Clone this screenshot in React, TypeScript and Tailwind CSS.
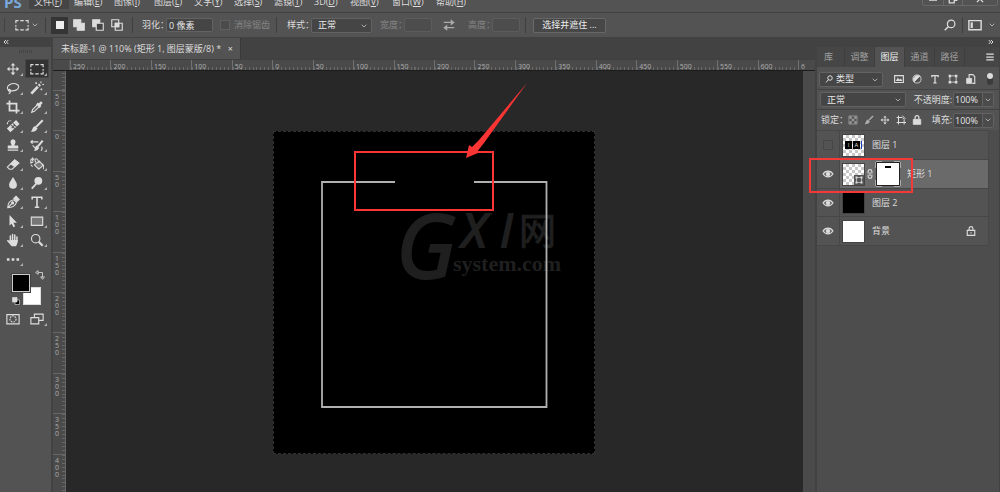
import { useState } from 'react';
import type { ReactNode } from 'react';
import clsx from 'clsx';
import { ChevronDown, ChevronsLeft, ChevronsRight } from 'lucide-react';

interface MenuItem {
    label: string;
    hotkey: string;
    width: string;
}

interface Tool {
    name: string;
    icon: ReactNode;
}

interface Layer {
    name: string;
    visible: boolean;
    kind: 'art' | 'shape' | 'black' | 'white';
}

const menus: MenuItem[] = [
    { label: '文件', hotkey: 'F', width: 'w-10' },
    { label: '编辑', hotkey: 'E', width: 'w-10' },
    { label: '图像', hotkey: 'I', width: 'w-10' },
    { label: '图层', hotkey: 'L', width: 'w-10' },
    { label: '文字', hotkey: 'Y', width: 'w-10' },
    { label: '选择', hotkey: 'S', width: 'w-10' },
    { label: '滤镜', hotkey: 'T', width: 'w-10' },
    { label: '3D', hotkey: 'D', width: 'w-9' },
    { label: '视图', hotkey: 'V', width: 'w-[42px]' },
    { label: '窗口', hotkey: 'W', width: 'w-11' },
    { label: '帮助', hotkey: 'H', width: 'w-10' },
];

const layers: Layer[] = [
    { name: '图层 1', visible: false, kind: 'art' },
    { name: '矩形 1', visible: true, kind: 'shape' },
    { name: '图层 2', visible: true, kind: 'black' },
    { name: '背景', visible: true, kind: 'white' },
];

const columnMarks = [250, 200, 150, 100, 50, 0, 50, 100, 150, 200, 250, 300, 350, 400, 450, 500, 550, 600];
const rowMarks = [50, 0, 50, 100, 150, 200, 250, 300, 350, 400];

function Icon({ children, className = 'size-3.5' }: { children: ReactNode; className?: string }) {
    return (
        <svg viewBox="0 0 16 16" fill="none" stroke="currentColor" strokeWidth="1.3" className={clsx('shrink-0', className)} aria-hidden="true">
            {children}
        </svg>
    );
}

const moveShape = (
    <>
        <path d="M8 3v10M3 8h10" />
        <path d="M8 1l2.7 3H5.3zM8 15l2.7-3H5.3zM1 8l3-2.7v5.4zM15 8l-3-2.7v5.4z" fill="currentColor" stroke="none" />
    </>
);

const marqueeShape = <path d="M1 6V3h3M6 3h4M12 3h3v3M15 8v2M15 11v2.500h-3M10 13.500H6M4 13.500H1V11M1 10V8" />;

const tools: Tool[] = [
    { name: '移动', icon: moveShape },
    { name: '矩形选框', icon: marqueeShape },
    {
        name: '套索',
        icon: (
            <path d="M4 11C1 10 .5 6.500 4 4.300 8 1.800 14.500 2.800 14.500 6.500c0 3.500-5 5.500-9.500 4.500M5 11c0-2-2.500-1.800-2.300-.2C3 12.400 5.500 11.500 5 11zm0 0c.2 2-.8 3.200-2 3.500" />
        ),
    },
    {
        name: '魔棒',
        icon: (
            <>
                <path d="M1.500 14.500l7.500-8" strokeWidth="3" />
                <path d="M10 5.500l1.500-1.500" strokeWidth="3" />
                <path d="M7 1.500v2M6 2.500h2M12.500.5v2M14 4h2M13 8.500v2M12 9.500h2" />
            </>
        ),
    },
    { name: '裁剪', icon: <path d="M4 .5V12h11.500M.5 4H12v11.500" strokeWidth="2" /> },
    {
        name: '吸管',
        icon: (
            <>
                <path d="M2 14l1-3 6-6 2 2-6 6z" />
                <path d="M8 4l4 4M10 6l3.500-3.500" strokeWidth="3" />
            </>
        ),
    },
    {
        name: '修复画笔',
        icon: (
            <>
                <path d="M3 13L13.500 3.500" strokeWidth="6" />
                <path d="M6 7l4 4M8 5l4 4M6.500 10.500l4-4" stroke="#555" />
                <path d="M1.500 6c0-3 2-4.500 4.500-4" strokeDasharray="2 1" />
            </>
        ),
    },
    {
        name: '画笔',
        icon: (
            <>
                <path d="M14.500 1.500L7 9" strokeWidth="2.400" />
                <path d="M6 8l2.500 2.500C7.500 14 4.500 14.500 1 14.500 3 13 2.500 9 6 8z" fill="currentColor" stroke="none" />
            </>
        ),
    },
    {
        name: '仿制图章',
        icon: (
            <path d="M8 1.500a3 3 0 0 1 2.400 4.700L9.500 8.500h4.500V12H2V8.500h4.500l-.9-2.300A3 3 0 0 1 8 1.500zM2 13.200h12v1.500H2z" fill="currentColor" stroke="none" />
        ),
    },
    {
        name: '历史记录画笔',
        icon: (
            <>
                <path d="M14.500 3L9 9.500" strokeWidth="2.400" />
                <path d="M8 8.500l2.500 2.500C9.500 14 7 14.500 4.500 14.500 6 13 5.500 9 8 8.500z" fill="currentColor" stroke="none" />
                <path d="M1.500 4.500h8M3 2.500l-2 2 2 2M3 8.500l3 3M13 10c1.500 1 1 3-.5 4.500" />
            </>
        ),
    },
    {
        name: '橡皮擦',
        icon: (
            <>
                <path d="M1.500 11.500L10 3.500l4.500 3.500-7.500 7H4z" />
                <path d="M5.500 8L10 3.500l4.500 3.500-4.500 4z" fill="currentColor" />
            </>
        ),
    },
    {
        name: '油漆桶',
        icon: (
            <>
                <path d="M5 9l5.500-4.500L15 9.500 10 14z" fill="#777" />
                <path d="M7 6.500C5 4 5.500 2 7 2s2.500 2 3.500 5M14 8c2 2 2 4 1.500 6" />
                <path d="M1 2.500h4M1 2.500v4.500l3-1.500M3 .5v4M1 9l2 2" />
            </>
        ),
    },
    { name: '模糊', icon: <path d="M8 1c2.500 4 4.500 6.500 4.500 9a4.500 4.500 0 0 1-9 0C3.500 7.500 5.500 5 8 1z" fill="currentColor" stroke="none" /> },
    {
        name: '减淡',
        icon: (
            <>
                <circle cx="9.500" cy="5.500" r="4.500" fill="currentColor" stroke="none" />
                <path d="M7 9l-5 5.500" strokeWidth="2" />
            </>
        ),
    },
    {
        name: '钢笔',
        icon: (
            <>
                <path d="M2 14.500c0-5 1.500-8 7-9l3 3c-1.500 4.500-4.500 6-10 6zM2 14.500l4.500-4.500" />
                <path d="M9 4l2.500-2.500L15 5l-2.500 2.500z" fill="currentColor" />
                <circle cx="7.500" cy="9" r="1.200" fill="currentColor" />
            </>
        ),
    },
    { name: '横排文字', icon: <path d="M2.500 5V2.500h11V5M8 2.500v11M5.500 14h5" strokeWidth="1.800" /> },
    { name: '路径选择', icon: <path d="M4 1l8.500 9H8.500l2 4-2 1-2-4L4 13z" fill="currentColor" stroke="none" /> },
    { name: '矩形', icon: <path d="M1.500 3.500h13v9.500h-13z" fill="#777" /> },
    {
        name: '抓手',
        icon: (
            <>
                <path d="M5 9.500V3.500M7.500 9V1.800M10 9V2.300M12.500 9V4.500" strokeWidth="1.700" strokeLinecap="round" />
                <path d="M4 8h9.500c0 3-.5 4.500-2 7H6.500C4.500 13 3 11 1 8.800c.5-1.500 2-1 3.500.8z" fill="currentColor" stroke="none" />
            </>
        ),
    },
    {
        name: '缩放',
        icon: (
            <>
                <circle cx="6.500" cy="6.500" r="4.800" />
                <path d="M10 10l4.500 4.500" strokeWidth="2.500" />
            </>
        ),
    },
];

function ToolButton({ name, children, active = false, onClick }: { name: string; children: ReactNode; active?: boolean; onClick?: () => void }) {
    return (
        <button
            type="button"
            aria-label={name}
            onClick={onClick}
            className={clsx('relative flex h-[19px] items-center justify-center', active && 'rounded-xs bg-[#333] shadow-[inset_0_0_0_1px_#454545]')}
        >
            {children}
            <span className="absolute right-0.5 bottom-0.5 size-[3px] bg-[#b0b0b0] [clip-path:polygon(100%_0,100%_100%,0_100%)]" />
        </button>
    );
}

function Divider({ className }: { className?: string }) {
    return <span className={clsx('h-4 w-px shrink-0 bg-[#3f3f3f]', className)} />;
}

function MenuBar() {
    return (
        <header className="flex h-[13px] shrink-0 items-end overflow-hidden border-b border-[#404040] pb-[3px]">
            <span className="ml-1 w-[25px] font-['Open_Sans',sans-serif] text-[15px] leading-[14px] font-bold text-[#78aadd]">PS</span>
            <nav className="flex">
                {menus.map((menu, idx) => (
                    <button
                        key={menu.label}
                        type="button"
                        className={clsx('h-3.5 shrink-0 pl-[5px] text-left leading-[14px] whitespace-nowrap', menu.width, idx === 0 && 'bg-[#454545]')}
                    >
                        {menu.label}(<u>{menu.hotkey}</u>)
                    </button>
                ))}
            </nav>
            <div className="mr-0.5 mb-[3px] ml-auto flex h-3.5 items-end rounded-xs border border-[#686868]">
                <button type="button" aria-label="最小化" className="flex h-3 w-5 items-end justify-center pb-1">
                    <span className="h-[3px] w-2 bg-[#bbb]" />
                </button>
                <button type="button" aria-label="还原" className="flex h-3 w-5 items-center justify-center border-x border-[#686868]">
                    <Icon className="size-2.5"><path d="M5 6V2h9v8h-3M2 6h8v8H2z" strokeWidth="2" /></Icon>
                </button>
                <button type="button" aria-label="关闭" className="flex h-3 w-[34px] items-center justify-center">
                    <Icon className="size-2.5"><path d="M3 3l10 10M13 3L3 13" strokeWidth="2" /></Icon>
                </button>
            </div>
        </header>
    );
}

const fieldClass = 'h-3.5 shrink-0 rounded-xs border border-[#626262] bg-[#454545] px-0.5 text-[#e6e6e6] disabled:border-[#5c5c5c] disabled:bg-[#4d4d4d]';

function SelectBox({ label, value, className, indent = 'pl-1.5' }: { label: string; value: string; className?: string; indent?: string }) {
    return (
        <div className={clsx('relative shrink-0', className)}>
            <select aria-label={label} defaultValue={value} className={clsx('block h-[15px] w-full appearance-none rounded-xs border border-[#626262] bg-[#454545] text-[#e6e6e6]', indent)}>
                <option>{value}</option>
            </select>
            <ChevronDown className="pointer-events-none absolute top-1 right-1 size-2" />
        </div>
    );
}

function OptionsBar() {
    return (
        <div className="flex h-6 shrink-0 items-center whitespace-nowrap">
            <span className="ml-1 h-3.5 w-px bg-[#424242]" />
            <Icon className="ml-2.5 size-3.5">{marqueeShape}</Icon>
            <ChevronDown className="ml-0.5 size-2" />
            <Divider className="ml-1.5" />
            <button type="button" aria-label="新选区" className="ml-[5px] flex size-[17px] items-center justify-center bg-[#353535]">
                <span className="size-2 bg-[#eee]" />
            </button>
            <button type="button" aria-label="添加到选区" className="ml-1">
                <Icon><path d="M2 2h8v4h4v8H6v-4H2z" fill="currentColor" /></Icon>
            </button>
            <button type="button" aria-label="从选区减去" className="ml-[5px]">
                <Icon><path d="M2 2h8v8H2z" fill="currentColor" /><path d="M6 6h8v8H6z" fill="#444" /></Icon>
            </button>
            <button type="button" aria-label="与选区交叉" className="ml-[5px]">
                <Icon><path d="M2 2h8v8H2zM6 6h8v8H6z" /><path d="M6 6h4v4H6z" fill="currentColor" /></Icon>
            </button>
            <Divider className="ml-2" />
            <label htmlFor="feather" className="ml-[9px] w-6">羽化：</label>
            <input id="feather" defaultValue="0 像素" className={clsx(fieldClass, 'w-[47px]')} />
            <input id="antialias" type="checkbox" disabled className="ml-[7px] size-2.5 appearance-none border border-[#606060] bg-[#4b4b4b]" />
            <label htmlFor="antialias" className="ml-1 w-9 text-[#858585]">消除锯齿</label>
            <Divider className="ml-1.5" />
            <label htmlFor="style" className="ml-2.5 w-6">样式：</label>
            <SelectBox label="样式" value="正常" className="w-[61px]" />
            <label htmlFor="width" className="ml-2 w-6 text-[#858585]">宽度：</label>
            <input id="width" disabled className={clsx(fieldClass, 'w-7')} />
            <Icon className="ml-2.5 size-3.5 text-[#aaa]">
                <path d="M2 5h10M4 11h10" />
                <path d="M10 1.500L14.500 5 10 8.500zM6 7.500L1.500 11 6 14.500z" fill="currentColor" stroke="none" />
            </Icon>
            <label htmlFor="height" className="ml-3 w-6 text-[#858585]">高度：</label>
            <input id="height" disabled className={clsx(fieldClass, 'w-7')} />
            <Divider className="ml-[5px]" />
            <button type="button" className="ml-[7px] h-[15px] w-[73px] shrink-0 rounded-xs border border-[#686868] bg-[#474747] text-[#eee]">选择并遮住 ...</button>
            <button type="button" aria-label="搜索" className="mr-1.5 ml-auto">
                <Icon className="size-3"><circle cx="9.500" cy="6.500" r="5" strokeWidth="1.600" /><path d="M6 10l-5 5" strokeWidth="2" /></Icon>
            </button>
            <Divider />
            <button type="button" aria-label="工作区" className="mr-1 ml-[5px] flex items-center gap-1.5">
                <Icon><path d="M1 3h14v10.500H1z" strokeWidth="1.600" /><path d="M3 5h2.500v6.500H3z" fill="currentColor" stroke="none" /></Icon>
                <ChevronDown className="size-2" />
            </button>
        </div>
    );
}

function ToolBox() {
    const [selected, setSelected] = useState('矩形选框');

    return (
        <aside className="flex w-[51px] shrink-0 flex-col">
            <div className="flex h-2.5 items-center bg-[#424242] pl-0.5">
                <ChevronsLeft className="size-2" strokeWidth={3} />
            </div>
            <div className="flex h-3 justify-center pt-[3px]">
                <span className="h-[3px] w-3.5 bg-[repeating-linear-gradient(90deg,#454545_0_1px,transparent_1px_2px)]" />
            </div>
            <div className="grid grid-cols-[24px_24px] pl-px">
                {tools.map(tool => (
                    <ToolButton key={tool.name} name={tool.name} active={selected === tool.name} onClick={() => setSelected(tool.name)}>
                        <Icon>{tool.icon}</Icon>
                    </ToolButton>
                ))}
                <ToolButton name="编辑工具栏">
                    <Icon><path d="M1 7h3v3H1zM6.500 7h3v3h-3zM12 7h3v3h-3z" fill="currentColor" stroke="none" /></Icon>
                </ToolButton>
            </div>
            <div className="grid grid-cols-[11px_8px_11px] grid-rows-[13px_6px_12px] pt-1.5 pl-3">
                <button type="button" aria-label="前景色" className="z-10 col-span-2 col-start-1 row-span-2 row-start-1 size-[18px] border border-[#ccc] bg-black outline outline-[#444]" />
                <button type="button" aria-label="背景色" className="col-span-2 col-start-2 row-span-2 row-start-2 size-[18px] border border-[#ddd] bg-white" />
                <button type="button" aria-label="切换颜色" className="col-start-3 row-start-1 -mt-1 ml-1 size-2.5">
                    <Icon className="size-2.5"><path d="M5 4h7v8M5 1L1 4l4 3zM9 11h6l-3 4z" fill="none" /></Icon>
                </button>
                <button type="button" aria-label="默认颜色" className="col-start-1 row-start-3 mt-1 size-2">
                    <Icon className="size-2"><path d="M6 6h9v9H6z" fill="#000" /><path d="M1 1h9v9H1z" fill="#ddd" /></Icon>
                </button>
            </div>
            <div className="mt-1 grid grid-cols-[24px_24px] pl-px">
                <button type="button" aria-label="快速蒙版" className="flex h-[19px] items-center justify-center">
                    <Icon><path d="M1 3h14v10.500H1z" /><circle cx="8" cy="8" r="3.500" strokeDasharray="2 1" /></Icon>
                </button>
                <ToolButton name="屏幕模式">
                    <Icon><path d="M5 2.500h10v7H5z" /><path d="M1 6.500h9v7H1z" fill="#535353" /></Icon>
                </ToolButton>
            </div>
        </aside>
    );
}

function TopRuler() {
    return (
        <div className="flex h-3 shrink-0 overflow-hidden border-y border-t-[#404040] border-b-[#1c1c1c] bg-[#4a4a4a] text-[7px] leading-[13px] text-[#aaa]">
            <span className="w-[17px] shrink-0 border-r border-[#555]" />
            <div className="grid w-[728px] shrink-0 grid-cols-[repeat(18,1fr)]">
                {columnMarks.map((mark, idx) => (
                    <div key={idx} className="h-2.5 border-l border-[#707070] bg-[repeating-linear-gradient(90deg,#686868_0_1px,transparent_1px_10%)] bg-[length:100%_3px] bg-bottom bg-no-repeat pl-0.5">
                        {mark}
                    </div>
                ))}
            </div>
            <span className="border-l border-[#707070] pl-0.5">6</span>
        </div>
    );
}

function SideRuler() {
    return (
        <div className="w-[13px] shrink-0 overflow-hidden border-r border-[#666] bg-[#4a4a4a] text-[7px] leading-[7px] text-[#aaa]">
            <div className="h-[19px] bg-[repeating-linear-gradient(0deg,#686868_0_1px,transparent_1px_4px)] bg-[length:3px_100%] bg-right bg-no-repeat" />
            <div className="grid h-[404px] grid-rows-[repeat(10,1fr)]">
                {rowMarks.map((mark, idx) => (
                    <div key={idx} className="flex flex-col border-t border-[#666] bg-[repeating-linear-gradient(180deg,#686868_0_1px,transparent_1px_10%)] bg-[length:3px_100%] bg-right bg-no-repeat pt-0.5 pl-0.5">
                        {String(mark).split('').map((digit, pos) => (
                            <span key={pos}>{digit}</span>
                        ))}
                    </div>
                ))}
            </div>
        </div>
    );
}

function Artboard() {
    return (
        <div className="absolute top-[60px] left-[207px] h-[323px] w-[322px] border border-dashed border-[#303030] bg-black">
            <svg width="322" height="323" viewBox="0 0 322 323" className="-mt-px -ml-px overflow-visible">
                <g fill="#1f1f1f" stroke="#1f1f1f">
                    <text x="123" y="147" fontSize="88" fontStyle="italic" strokeWidth="2" className="font-['Noto_Sans',sans-serif]">G</text>
                    <text x="189" y="116" fontSize="46" fontStyle="italic" strokeWidth="2" className="font-['Noto_Sans',sans-serif]">X</text>
                    <text x="227" y="116" fontSize="46" fontStyle="italic" strokeWidth="2" className="font-['Open_Sans',sans-serif]">I</text>
                    <text x="246" y="114" fontSize="37" className="font-['Noto_Sans_CJK_SC',sans-serif]">网</text>
                    <text x="180" y="140" fontSize="22" fontWeight="bold" stroke="none" className="font-['Liberation_Serif',serif]">system.com</text>
                </g>
                <path d="M122 51H49v225h224.500V51H201" fill="none" stroke="#b0b0b0" strokeWidth="1.800" />
                {/* callout box and its arrow */}
                <path d="M82 21h138v58H82z" fill="none" stroke="#fb3434" strokeWidth="2" />
                <path d="M254-48L211 12 205 19.500 205 22 193 27 196 14 199 16 206 9z" fill="#fb3434" />
            </svg>
        </div>
    );
}

function DocumentArea() {
    return (
        <main className="flex min-w-0 flex-1 flex-col border-x-2 border-[#424242] bg-[#4a4a4a]">
            <div className="flex h-[22px] shrink-0 bg-[#424242] pt-px">
                <div className="flex w-[188px] items-center border-r border-[#383838] bg-[#535353] pl-2 whitespace-nowrap">
                    <span>未标题-1 @ 110% (矩形 1, 图层蒙版/8) *</span>
                    <button type="button" aria-label="关闭文档" className="ml-auto mr-[7px]">×</button>
                </div>
            </div>
            <TopRuler />
            <div className="flex min-h-0 flex-1">
                <SideRuler />
                <div className="relative min-w-0 flex-1 overflow-hidden bg-[#282828]">
                    <Artboard />
                </div>
                <div className="w-3 shrink-0 bg-[#4a4a4a]" />
            </div>
        </main>
    );
}

const checker = 'bg-[conic-gradient(#c8c8c8_25%,#fff_0_50%,#c8c8c8_0_75%,#fff_0)] bg-[length:6px_6px]';

function Thumbnail({ kind }: { kind: Layer['kind'] }) {
    if (kind === 'art') {
        return (
            <span className={clsx('flex size-[23px] items-center gap-px border border-[#444] pl-0.5', checker)}>
                <span className="flex h-2 w-[7px] items-center justify-center bg-black text-[6px] leading-none">I</span>
                <span className="flex h-2 w-[7px] items-center justify-center bg-black text-[6px] leading-none">A</span>
                <span className="h-2 w-px bg-[#1740c0]" />
            </span>
        );
    }
    if (kind === 'shape') {
        return (
            <span className={clsx('flex size-[23px] items-end justify-end border border-[#444]', checker)}>
                <span className="flex size-2.5 items-center justify-center bg-[#555]">
                    <Icon className="size-2"><path d="M3 3h10v10H3z" /><path d="M1 1h4v4H1zM11 1h4v4h-4zM1 11h4v4H1zM11 11h4v4h-4z" fill="currentColor" stroke="none" /></Icon>
                </span>
            </span>
        );
    }
    return <span className={clsx('size-[23px] border border-[#444]', kind === 'black' ? 'bg-black' : 'bg-white')} />;
}

function LayerMask() {
    return (
        <span className="grid size-[26px]">
            <svg viewBox="0 0 26 26" fill="none" stroke="#eee" className="[grid-area:1/1]" aria-hidden="true">
                <path d="M1 7V1h6M19 1h6v6M25 19v6h-6M7 25H1v-6" />
            </svg>
            <span className="flex size-6 justify-center place-self-center border border-[#222] bg-white pt-[3px] [grid-area:1/1]">
                <span className="h-0.5 w-1.5 bg-black" />
            </span>
        </span>
    );
}

function LayerRow({ layer, selected, onSelect, onToggle }: { layer: Layer; selected: boolean; onSelect: () => void; onToggle: () => void }) {
    return (
        <li className={clsx('relative flex items-stretch border-b border-[#474747]', layer.kind === 'black' ? 'h-7' : 'h-[29px]', selected ? 'bg-[#6a6a6a]' : 'bg-[#535353]')}>
            <button type="button" aria-label="显示图层" onClick={onToggle} className="flex w-[23px] items-center justify-center border-r border-[#474747] bg-[#535353]">
                {layer.visible ? (
                    <Icon className="size-3">
                        <path d="M1.500 8c3-5 10-5 13 0-3 5-10 5-13 0z" strokeWidth="1.700" />
                        <circle cx="8" cy="8" r="2.500" fill="currentColor" />
                    </Icon>
                ) : (
                    <span className="size-2.5 border border-[#474747]" />
                )}
            </button>
            <button type="button" onClick={onSelect} className="flex flex-1 items-center pl-0.5 text-left">
                <Thumbnail kind={layer.kind} />
                {layer.kind === 'shape' && (
                    <>
                        <Icon className="size-2.5"><path d="M5 7V4a3 3 0 0 1 6 0v3M5 9v3a3 3 0 0 0 6 0V9M8 5v6" strokeWidth="1.800" /></Icon>
                        <LayerMask />
                    </>
                )}
                <span className={layer.kind === 'shape' ? 'ml-1.5' : 'ml-[7px]'}>{layer.name}</span>
                {layer.name === '背景' && (
                    <Icon className="mr-3 ml-auto size-2.5"><path d="M2 7h12v8H2zM5 7V4a3 3 0 0 1 6 0v3M8 10v2" strokeWidth="1.800" /></Icon>
                )}
            </button>
            {layer.kind === 'shape' && <span className="pointer-events-none absolute -top-0.5 -left-2 z-10 h-[35px] w-[104px] border-2 border-[#f53838]" />}
        </li>
    );
}

function PercentField({ id, label }: { id: string; label: string }) {
    return (
        <>
            <label htmlFor={id} className="mr-px ml-auto whitespace-nowrap">{label}</label>
            <input id={id} defaultValue="100%" className="h-[15px] w-[30px] rounded-l-xs border border-[#626262] bg-[#454545] px-px text-[#e6e6e6]" />
            <button type="button" aria-label="调整数值" className="mr-[5px] flex h-[15px] w-[11px] items-center justify-center rounded-r-xs border border-l-0 border-[#626262] bg-[#4b4b4b]">
                <ChevronDown className="size-2" />
            </button>
        </>
    );
}

function LayersPanel() {
    const [items, setItems] = useState(layers);
    const [selected, setSelected] = useState('矩形 1');
    const tabs = ['库', '调整', '图层', '通道', '路径'];

    const toggleLayer = (name: string) => {
        setItems(prev => prev.map(l => (l.name === name ? { ...l, visible: !l.visible } : l)));
    };

    return (
        <aside className="flex w-[183px] shrink-0 flex-col border-r border-[#424242] bg-[#4d4d4d]">
            <div className="flex h-2.5 shrink-0 items-center justify-end bg-[#424242] pr-1">
                <ChevronsRight className="size-2" strokeWidth={3} />
            </div>
            <div className="flex h-5 shrink-0 bg-[#464646]">
                {tabs.map((tab, idx) => (
                    <button
                        key={tab}
                        type="button"
                        className={clsx('border-r border-[#3e3e3e]', idx === 0 ? 'w-7 pr-1' : 'w-[30px]', tab === '图层' ? 'bg-[#535353] text-[#f0f0f0]' : 'text-[#a0a0a0]')}
                    >
                        {tab}
                    </button>
                ))}
                <button type="button" aria-label="面板菜单" className="mr-1 ml-auto">
                    <Icon className="size-2.5"><path d="M2 3.500h12M2 8h12M2 12.500h12" strokeWidth="2" /></Icon>
                </button>
            </div>
            <div className="flex h-[23px] shrink-0 items-center border-b border-[#424242] bg-[#535353] pt-0.5 pl-0.5">
                <div className="relative w-16">
                    <SelectBox label="滤镜类型" value="类型" indent="pl-4" />
                    <Icon className="pointer-events-none absolute top-[3px] left-1.5 size-2"><circle cx="10" cy="6" r="4.500" strokeWidth="2" /><path d="M7 9l-5 6" strokeWidth="2" /></Icon>
                </div>
                <div className="ml-[11px] flex gap-2">
                    <Icon className="size-2.5"><path d="M1 2.500h14v11H1z" strokeWidth="1.800" /><path d="M3 11l3-5 3 3 2-2 2.500 4z" fill="currentColor" stroke="none" /></Icon>
                    <Icon className="size-2.5"><circle cx="8" cy="8" r="6.500" /><path d="M3.500 12.500A6.500 6.500 0 0 1 12.500 3.500z" fill="currentColor" /></Icon>
                    <Icon className="size-2.5"><path d="M3 5V2.500h10V5M8 2.500v11M5.500 14h5" strokeWidth="2" /></Icon>
                    <Icon className="size-2.5"><path d="M3 3h10v10H3z" /><path d="M1 1h4v4H1zM11 1h4v4h-4zM1 11h4v4H1zM11 11h4v4h-4z" fill="currentColor" stroke="none" /></Icon>
                    <Icon className="size-2.5"><path d="M5 7V1h6l3 3v11h-4" strokeWidth="1.800" /><path d="M1 7h8v8H1z" fill="currentColor" /></Icon>
                </div>
                <button type="button" aria-label="打开滤镜" className="mr-1.5 ml-auto h-3 w-1.5 rounded-full bg-[#3c3c3c]">
                    <span className="mb-1.5 block size-1.5 rounded-full bg-[#ddd]" />
                </button>
            </div>
            <div className="flex h-5 shrink-0 items-center border-b border-[#424242] bg-[#535353] pl-[3px]">
                <SelectBox label="混合模式" value="正常" className="w-[86px]" />
                <PercentField id="opacity" label="不透明度:" />
            </div>
            <div className="flex h-5 shrink-0 items-center bg-[#535353] pl-1">
                <span className="w-[27px] whitespace-nowrap">锁定：</span>
                <div className="flex gap-1.5">
                    <Icon className="size-2.5"><path d="M1.500 1.500h13v13h-13z" stroke="#999" /><path d="M2 2h4v4H2zM10 2h4v4h-4zM6 6h4v4H6zM2 10h4v4H2zM10 10h4v4h-4z" fill="#999" stroke="none" /></Icon>
                    <Icon className="size-2.5 text-[#aaa]"><path d="M14.500 1.500L8 8" strokeWidth="2.500" /><path d="M6 7l3.500 3.500C8 14.500 4 14.500 1 15 3 12 3 8 6 7z" fill="currentColor" stroke="none" /></Icon>
                    <Icon className="size-2.5">{moveShape}</Icon>
                    <Icon className="size-2.5"><path d="M4 1v14M1 4h9l3 3v8M1 12h15M10 1l5 5" strokeWidth="1.600" /></Icon>
                    <Icon className="size-2.5"><path d="M2 7h12v8H2z" fill="currentColor" /><path d="M5 7V4a3 3 0 0 1 6 0v3" strokeWidth="2" /></Icon>
                </div>
                <PercentField id="fill" label="填充:" />
            </div>
            <ul className="mr-2.5 border-t border-r border-[#484848]">
                {items.map(layer => (
                    <LayerRow
                        key={layer.name}
                        layer={layer}
                        selected={selected === layer.name}
                        onSelect={() => setSelected(layer.name)}
                        onToggle={() => toggleLayer(layer.name)}
                    />
                ))}
            </ul>
        </aside>
    );
}

export default function App() {
    return (
        <div className="flex h-screen flex-col overflow-hidden bg-[#535353] font-['Open_Sans','Noto_Sans_CJK_SC',sans-serif] text-[9px] leading-3 text-[#ddd]">
            <MenuBar />
            <OptionsBar />
            <div className="flex min-h-0 flex-1">
                <ToolBox />
                <DocumentArea />
                <LayersPanel />
            </div>
        </div>
    );
}
